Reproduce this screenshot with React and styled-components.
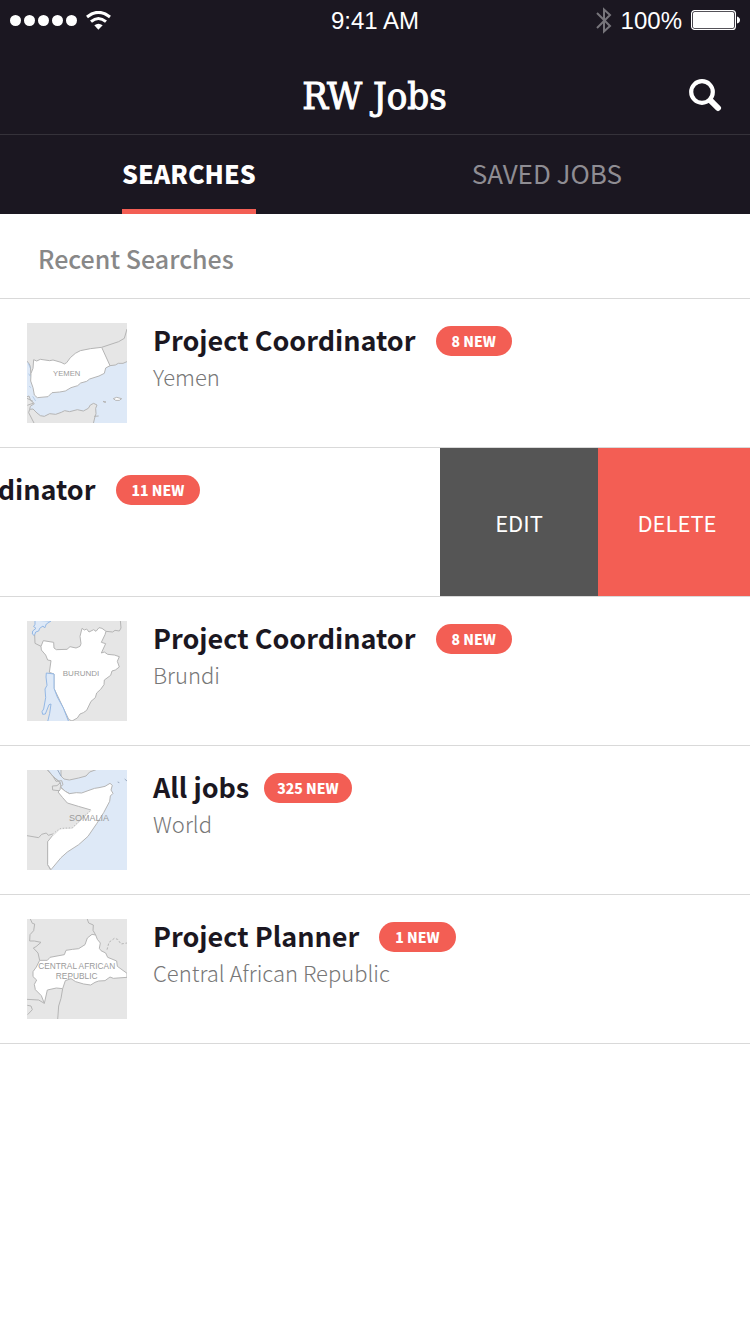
import React from "react";
import styled, { createGlobalStyle } from "styled-components";

const ink = "#1b1721";
const coral = "#f35e54";
const rule = "#d9d9d9";
const sans = '"Noto Sans CJK SC", "Noto Sans", sans-serif';
const system = '"Liberation Sans", Arial, sans-serif';

const GlobalStyle = createGlobalStyle`
  *, *::before, *::after { box-sizing: border-box; }
  body { margin: 0; background: #fff; color: ${ink}; font-family: ${sans}; }
  h1, h2, h3, p, ul { margin: 0; padding: 0; }
  button { margin: 0; padding: 0; border: 0; background: none; font: inherit; color: inherit; cursor: pointer; }
`;

const Page = styled.div`
  min-height: 100vh;
  overflow-x: hidden;
  background: #fff;
`;

const Header = styled.header`
  background: ${ink};
  color: #fff;
`;

const StatusBar = styled.div`
  display: grid;
  grid-template-columns: 1fr auto 1fr;
  align-items: center;
  height: 40px;
  padding: 0 10px;
  font: 24px/40px ${system};
`;

const StatusText = styled.span`
  padding-top: 2px;
  line-height: 38px;
`;

const StatusGroup = styled.div`
  display: flex;
  align-items: center;
  justify-content: ${(p) => (p.$end ? "flex-end" : "flex-start")};
  gap: 9px;
`;

const Dots = styled.span`
  display: flex;
  gap: 3px;
`;

const Dot = styled.i`
  width: 11px;
  height: 11px;
  border-radius: 50%;
  background: #fff;
`;

const TitleBar = styled.div`
  display: grid;
  grid-template-columns: 1fr auto 1fr;
  align-items: center;
  height: 95px;
  padding: 0 28px 0 27px;
  border-bottom: 1px solid #35323a;
`;

const Title = styled.h1`
  grid-column: 2;
  padding-top: 18px;
  font: 400 38px/56px "DejaVu Serif Condensed", "DejaVu Serif", serif;
  -webkit-text-stroke: 1px #fff;
`;

const SearchButton = styled.button`
  && {
    grid-column: 3;
    justify-self: end;
    display: flex;
    padding-top: 16px;
  }
`;

const Tabs = styled.nav`
  display: flex;
  justify-content: space-between;
  height: 79px;
  padding: 0 128px 0 122px;
`;

const Tab = styled.button`
  && {
    padding-top: 1px;
    border-bottom: 5px solid ${(p) => (p.$active ? coral : "transparent")};
    color: ${(p) => (p.$active ? "#fff" : "#8f8d93")};
    font-size: ${(p) => (p.$active ? "25px" : "26px")};
    font-weight: ${(p) => (p.$active ? 900 : 400)};
    line-height: 36px;
  }
`;

const SectionTitle = styled.h2`
  padding: 26px 38px 22px;
  border-bottom: 1px solid ${rule};
  color: #888;
  font-size: 25px;
  font-weight: 500;
  line-height: 36px;
`;

const List = styled.ul`
  list-style: none;
`;

const Row = styled.li`
  display: flex;
  justify-content: flex-end;
  gap: 10px;
  overflow: hidden;
  border-bottom: 1px solid ${rule};
`;

const RowContent = styled.div`
  display: flex;
  flex: 0 0 100%;
  gap: 26px;
  padding: 24px 27px;
`;

const Thumb = styled.div`
  flex: none;
  width: 100px;
  height: 100px;
  background: #e6e6e6;

  svg { display: block; }
`;

const RowHead = styled.div`
  display: flex;
  align-items: center;
  gap: ${(p) => (p.$wide ? "15px" : "20px")};
  height: 36px;
`;

const JobTitle = styled.h3`
  padding-bottom: 2px;
  font-size: 27px;
  font-weight: 700;
  line-height: 32px;
  white-space: nowrap;
`;

const Badge = styled.span`
  padding: 0 ${(p) => (p.$wide ? "13px" : "16px")};
  border-radius: 15px;
  background: ${coral};
  color: #fff;
  font-size: 14px;
  font-weight: 900;
  line-height: 30px;
  white-space: nowrap;
`;

const Place = styled.p`
  color: #777;
  font-size: 22px;
  font-weight: 300;
  line-height: 34px;
`;

const Action = styled.button`
  && {
    flex: 0 0 ${(p) => (p.$danger ? "152px" : "158px")};
    padding-left: ${(p) => (p.$danger ? "6px" : "0")};
    background: ${(p) => (p.$danger ? coral : "#555")};
    color: #fff;
    font-size: 22px;
    line-height: 32px;
  }
`;

const Actions = styled.div`
  display: flex;
  flex: none;
`;

const WifiIcon = () => (
  <svg width="25" height="19" viewBox="0 0 75 57" fill="none" aria-hidden="true">
    <path d="M3 18Q37 -10 72 18" stroke="#fff" strokeWidth="9" />
    <path d="M15 32Q37 13 60 32" stroke="#fff" strokeWidth="9" />
    <path d="M25 43Q37 33 50 43L37 56Z" fill="#fff" />
  </svg>
);

const BluetoothIcon = () => (
  <svg width="16" height="27" viewBox="0 0 16 27" fill="none" stroke="#77757b" strokeWidth="2" aria-hidden="true">
    <path d="M1 6L14 19L8 24.500V2.500L14 8L1 21" />
  </svg>
);

const BatteryIcon = () => (
  <svg width="49" height="20" viewBox="0 0 49 20" aria-hidden="true">
    <rect x=".6" y=".6" width="43.800" height="18.800" rx="3" fill="none" stroke="#fff" strokeWidth="1.200" />
    <rect x="2" y="2" width="41" height="16" rx="1.500" fill="#fff" />
    <path d="M46 6.500Q49 7.500 49 10T46 13.500Z" fill="#fff" />
  </svg>
);

const SearchIcon = () => (
  <svg width="33" height="33" viewBox="0 0 33 33" fill="none" stroke="#fff" aria-hidden="true">
    <circle cx="13" cy="13" r="10.800" strokeWidth="4.200" />
    <path d="M21.500 21.500L29 29" strokeWidth="6" strokeLinecap="round" />
    <path d="M20 20L24 24" strokeWidth="5" />
  </svg>
);

const land = "#e6e6e6";
const water = "#dee9f7";
const border = "#b5b5b5";

const MapSvg = ({ label, background = land, children }) => (
  <svg
    width="100"
    height="100"
    viewBox="30 30 300 300"
    fill="none"
    stroke={border}
    strokeWidth="3"
    strokeLinejoin="round"
    role="img"
    aria-label={label}
  >
    <rect x="30" y="30" width="300" height="300" fill={background} stroke="none" />
    {children}
  </svg>
);

const MapText = styled.text`
  fill: #9a9a9a;
  stroke: none;
  font-family: ${system};
  font-size: ${(p) => p.$size}px;
  text-anchor: middle;
`;

const YemenMap = () => (
  <MapSvg label="Map of Yemen" background={water}>
    <path fill={land} d="M28 28H332V145L318 151L304 151L295 156L279 158L60 190L42 188L40 160L36 152L28 142Z" />
    <path d="M254 103L305 86L322 76L330 48" />
    <path
      fill="#fff"
      d="M50 140L59 144L70 139L98 143L108 141L132 148L142 153L149 149L160 134L175 121L190 113L220 107L254 103L279 158L266 165L262 181L246 189L218 198L209 205L191 210L182 218L162 224L145 234L128 237L105 239L93 251L61 254L52 246L48 224L41 204L42 181L48 166Z"
    />
    <path fill={land} d="M28 252L36 249L41 262L52 272L40 280L38 289L48 288L60 300L70 308L82 310L98 302L116 304L133 298L143 293L158 296L181 290L199 294L214 286L220 276L230 271L240 276L236 286L237 302L233 315L229 332H28Z" />
    <path d="M30 256L48 265M31 277L50 270M38 289L35 299L52 332M231 310L245 309" />
    <path d="M34 151L40 165M35 182L40 190M37 219L41 224M47 250L56 264" stroke="#9dbbe0" strokeWidth="2" />
    <path fill="#fff" d="M289 257L299 253L314 257L307 262L296 262ZM258 265L267 267L262 268Z" />
    <MapText x="149" y="190" $size={23}>YEMEN</MapText>
  </MapSvg>
);

const BurundiMap = () => (
  <MapSvg label="Map of Burundi">
    <path fill={water} stroke="#94b8e5" d="M54 28V40L50 47L57 52L47 60L46 69L52 74L56 63L65 60L68 52L78 45L83 51L88 39L102 30Z" />
    <path d="M53 72L54 97L72 106M267 61L287 63L294 58L307 60L312 51L310 28" />
    <path
      fill="#fff"
      d="M72 106L79 89L110 94L111 111L118 116L150 115L159 107L177 111L189 106L192 98L189 76L195 52L202 57L209 54L216 63L230 56L237 61L246 50L255 52L267 61L264 71L253 94L266 98L253 126L262 123L272 130L292 132L307 137L301 151L307 168L295 177L285 180L281 193L262 207L261 221L251 235L239 246L235 260L222 271L209 298L199 305L189 309L181 321L165 330L155 325L111 232V189L97 184L102 149L92 147L86 132L73 117Z"
    />
    <path fill={water} stroke="#94b8e5" d="M88 186L111 189V232L121 258L139 291L155 332H92L98 307L102 279L96 281L85 309L77 310L75 302L80 294L86 260L84 234L90 223L87 198Z" />
    <MapText x="192" y="196" $size={24}>BURUNDI</MapText>
  </MapSvg>
);

const SomaliaMap = () => (
  <MapSvg label="Map of Somalia" background={water}>
    <path fill={land} d="M28 28H90L109 50L130 68L132 82L145 94L230 140L206 205L92 245V314L102 332H28Z" />
    <path fill={land} d="M132 28V48L141 57L157 60L185 54L207 48L218 36L240 28Z" />
    <path
      fill="#fff"
      d="M130 82L145 94L157 101L178 98L194 99L213 92L233 85L246 83L264 79L279 70L286 76L282 90L288 100L280 108L278 124L260 158L239 191L213 229L185 254L151 276L132 293L102 329L92 314V245L107 226L128 206L166 203L222 150L184 139L151 129L137 113L123 96L129 90Z"
    />
    <path stroke={land} strokeWidth="5" d="M107 226L128 206L166 203L222 150" />
    <path strokeDasharray="3 6" d="M107 222L128 206L166 203L222 150" />
    <path d="M90 28L109 50L130 68L120 77L106 78L107 90L126 92M109 50L117 64L134 62L138 74L130 80M30 227L65 233L74 223L88 219L94 226L107 222" />
    <path d="M122 30L132 48M302 66L307 68M323 57L330 63" stroke="#9babc1" />
    <MapText x="216" y="184" $size={27}>SOMALIA</MapText>
  </MapSvg>
);

const CarMap = () => (
  <MapSvg label="Map of the Central African Republic">
    <path d="M40 30L46 43L53 45L50 65L39 77L38 96H52L72 100L57 113L49 117L63 132L68 154M210 28L215 42L229 48L228 64L236 78M82 283L65 273L30 271M137 239L132 268L125 291L122 332M31 289L42 291L46 302L32 317" />
    <path strokeDasharray="7 5" d="M270 122L276 100L292 88L302 91L312 105L330 102" />
    <path
      fill="#fff"
      d="M68 154L91 154L99 145L120 141L142 137L147 124L167 121L185 119L204 107L211 87L225 76L236 78L241 91L250 102L247 118L252 125L266 132L272 145L282 149L299 156L301 172L330 193V205L289 208L279 204L264 215L245 216L234 220L221 228L200 225L176 218L162 209L145 215L137 239L118 237L91 243L82 283L73 260L55 242L52 226L59 213L48 203L48 188L58 174Z"
    />
    <MapText x="179" y="179" $size={25}>CENTRAL AFRICAN</MapText>
    <MapText x="179" y="209" $size={25}>REPUBLIC</MapText>
  </MapSvg>
);

const searches = [
  { title: "Project Coordinator", count: 8, place: "Yemen", Map: YemenMap },
  { title: "Project Coordinator", count: 11, swiped: true },
  { title: "Project Coordinator", count: 8, place: "Brundi", Map: BurundiMap },
  { title: "All jobs", count: 325, place: "World", Map: SomaliaMap },
  { title: "Project Planner", count: 1, place: "Central African Republic", Map: CarMap },
];

function SearchRow({ title, count, place, Map, swiped }) {
  const wide = count > 99;
  return (
    <Row>
      <RowContent>
        <Thumb>{Map && <Map />}</Thumb>
        <div>
          <RowHead $wide={wide}>
            <JobTitle>{title}</JobTitle>
            <Badge $wide={wide}>{count} NEW</Badge>
          </RowHead>
          {place && <Place>{place}</Place>}
        </div>
      </RowContent>
      {swiped && (
        <Actions>
          <Action type="button">EDIT</Action>
          <Action type="button" $danger>DELETE</Action>
        </Actions>
      )}
    </Row>
  );
}

export default function App() {
  return (
    <Page>
      <GlobalStyle />
      <Header>
        <StatusBar>
          <StatusGroup>
            <Dots>
              {[0, 1, 2, 3, 4].map((n) => (
                <Dot key={n} />
              ))}
            </Dots>
            <WifiIcon />
          </StatusGroup>
          <StatusText>9:41 AM</StatusText>
          <StatusGroup $end>
            <BluetoothIcon />
            <StatusText>100%</StatusText>
            <BatteryIcon />
          </StatusGroup>
        </StatusBar>
        <TitleBar>
          <Title>RW Jobs</Title>
          <SearchButton type="button" aria-label="Search">
            <SearchIcon />
          </SearchButton>
        </TitleBar>
        <Tabs>
          <Tab type="button" $active>SEARCHES</Tab>
          <Tab type="button">SAVED JOBS</Tab>
        </Tabs>
      </Header>
      <main>
        <SectionTitle>Recent Searches</SectionTitle>
        <List>
          {searches.map((s, i) => (
            <SearchRow key={i} {...s} />
          ))}
        </List>
      </main>
    </Page>
  );
}
